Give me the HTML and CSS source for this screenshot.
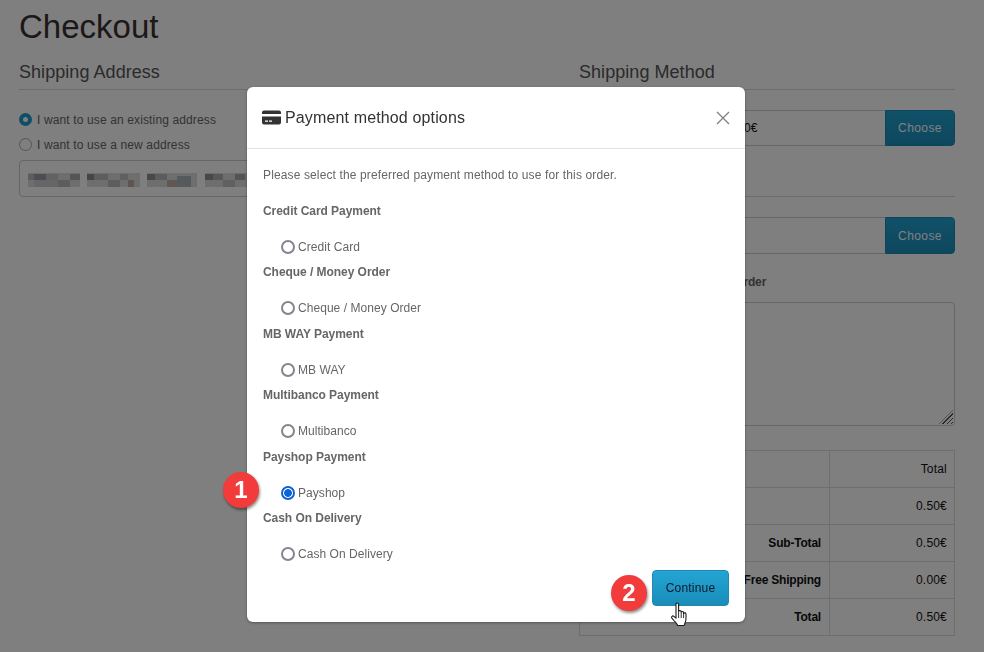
FILE: index.html
```html
<!DOCTYPE html>
<html lang="en">
<head>
  <meta charset="UTF-8" />
  <title>Checkout</title>
  <link rel="stylesheet" href="styles.css">
</head>
<body>
  <div class="page">
    <h1>Checkout</h1>
    <div class="columns">
      <div class="col">
        <h2>Shipping Address</h2>
        <label class="address-opt"><input type="radio" name="addr" class="page-radio" checked /> I want to use an existing address</label>
        <label class="address-opt"><input type="radio" name="addr" class="page-radio" /> I want to use a new address</label>
        <div class="address-select">
          <svg class="pixels" width="240" height="14" viewBox="0 0 240 14">
            <rect x="0" y="0" width="52" height="14" fill="#ddd"/>
            <rect x="0" y="1" width="6" height="6" fill="#bbb"/>
            <rect x="6" y="1" width="12" height="6" fill="#9a9aa8"/>
            <rect x="18" y="1" width="12" height="6" fill="#c4c4c4"/>
            <rect x="30" y="7" width="12" height="7" fill="#bbb"/>
            <rect x="42" y="1" width="10" height="6" fill="#a8aab0"/>
            <rect x="6" y="7" width="24" height="7" fill="#ccc"/>
            <rect x="59" y="0" width="53" height="14" fill="#ddd"/>
            <rect x="59" y="1" width="7" height="6" fill="#8a8a92"/>
            <rect x="66" y="1" width="14" height="6" fill="#b4bcbc"/>
            <rect x="80" y="7" width="12" height="7" fill="#bbb"/>
            <rect x="92" y="1" width="8" height="6" fill="#c0c0c0"/>
            <rect x="100" y="7" width="6" height="7" fill="#b8aaa4"/>
            <rect x="119" y="0" width="50" height="14" fill="#ddd"/>
            <rect x="119" y="1" width="8" height="6" fill="#909098"/>
            <rect x="127" y="1" width="12" height="6" fill="#b8b8b8"/>
            <rect x="139" y="7" width="10" height="7" fill="#c0b0a8"/>
            <rect x="149" y="3" width="14" height="11" fill="#aab4ba"/>
            <rect x="177" y="0" width="50" height="14" fill="#ddd"/>
            <rect x="177" y="1" width="8" height="6" fill="#8e8e9a"/>
            <rect x="185" y="1" width="10" height="6" fill="#b0b0b0"/>
            <rect x="195" y="7" width="12" height="7" fill="#c0c0c0"/>
            <rect x="207" y="1" width="10" height="6" fill="#a8a8b0"/>
          </svg>
        </div>
      </div>
      <div class="col">
        <h2>Shipping Method</h2>
        <div class="input-group">
          <div class="input-box">Free Shipping Standard - 0.50€</div>
          <button class="btn-choose">Choose</button>
        </div>
        <div class="divider"></div>
        <div class="input-group tall">
          <div class="input-box"></div>
          <button class="btn-choose">Choose</button>
        </div>
        <div class="comment-label">Add Comments About Your Order</div>
        <div class="comment-wrap">
          <textarea class="comment-box"></textarea>
          <span class="grip"></span>
        </div>
        <table class="totals">
          <tr><td colspan="2"></td><td class="amount">Total</td></tr>
          <tr><td colspan="2"></td><td class="amount">0.50€</td></tr>
          <tr><td colspan="2" class="label">Sub-Total</td><td class="amount">0.50€</td></tr>
          <tr><td colspan="2" class="label">Free Shipping</td><td class="amount">0.00€</td></tr>
          <tr><td colspan="2" class="label">Total</td><td class="amount">0.50€</td></tr>
        </table>
      </div>
    </div>
  </div>

  <div class="backdrop">
    <div class="modal">
      <div class="modal-header">
        <h3>
          <svg class="card-icon" width="19" height="15" viewBox="0 0 19 15">
            <path fill="#333" d="M2 0.5h15a2 2 0 0 1 2 2V4H0V2.500a2 2 0 0 1 2-2zM0 6.500h19v6a2 2 0 0 1-2 2H2a2 2 0 0 1-2-2zM3 10.500v1.200h3v-1.200zM7 10.500v1.200h3v-1.200z"/>
          </svg>
          Payment method options
        </h3>
        <svg class="close" width="14" height="14" viewBox="0 0 14 14">
          <path d="M1 1l12 12M13 1L1 13" stroke="#808080" stroke-width="1.300" fill="none"/>
        </svg>
      </div>
      <div class="modal-body">
        <p class="intro">Please select the preferred payment method to use for this order.</p>
        <div class="pay-group">
          <div class="pay-title">Credit Card Payment</div>
          <label class="pay-opt"><input type="radio" name="pay" /> Credit Card</label>
        </div>
        <div class="pay-group">
          <div class="pay-title">Cheque / Money Order</div>
          <label class="pay-opt"><input type="radio" name="pay" /> Cheque / Money Order</label>
        </div>
        <div class="pay-group">
          <div class="pay-title">MB WAY Payment</div>
          <label class="pay-opt"><input type="radio" name="pay" /> MB WAY</label>
        </div>
        <div class="pay-group">
          <div class="pay-title">Multibanco Payment</div>
          <label class="pay-opt"><input type="radio" name="pay" /> Multibanco</label>
        </div>
        <div class="pay-group">
          <div class="pay-title">Payshop Payment</div>
          <label class="pay-opt"><input type="radio" name="pay" checked /> Payshop</label>
        </div>
        <div class="pay-group">
          <div class="pay-title">Cash On Delivery</div>
          <label class="pay-opt"><input type="radio" name="pay" /> Cash On Delivery</label>
        </div>
      </div>
      <div class="modal-footer">
        <button class="btn-continue">Continue</button>
      </div>
      <span class="step step-one">1</span>
      <span class="step step-two">2</span>
      <svg class="hand" width="18" height="26" viewBox="0 0 18 26">
        <path fill="#fff" stroke="#1a1a1a" stroke-width="1.100" stroke-linejoin="round" d="M5 2.200c0-1.600 2.600-1.600 2.600 0V9.500c.3-1.300 2.500-1.200 2.600.2v.6c.4-1.100 2.300-1 2.400.4v.7c.5-.9 2.300-.7 2.400.8 .1 2.800 .2 5.300-.5 7.500-.4 1.400-1 2.500-1.300 3.800H6.600c-.6-1.800-2-3-3.300-4.500L.9 16.100c-.9-1.300 .7-2.900 2-1.800L5 16.200z"/>
        <path stroke="#1a1a1a" stroke-width=".900" fill="none" d="M7.600 10v6M10.200 10.500v5.500M12.600 11v5"/>
      </svg>
    </div>
  </div>
</body>
</html>
```

FILE: styles.css
```css
* {
  box-sizing: border-box;
}

html, body {
  height: 100%;
}

body {
  margin: 0;
  background: #fff;
  color: #333;
  font-family: "Liberation Sans", Arial, sans-serif;
  font-size: 12px;
  overflow: hidden;
}

.page {
  padding: 0 29px 0 19px;
}

h1 {
  margin: 0;
  padding-top: 9px;
  height: 54px;
  font-size: 33px;
  line-height: 36px;
  font-weight: 400;
  color: #3a3030;
}

.columns {
  display: grid;
  grid-template-columns: 1fr 376px;
  column-gap: 30px;
}

h2 {
  margin: 0 0 20px;
  height: 36px;
  padding-top: 8px;
  border-bottom: 1px solid #d8d8d8;
  font-size: 18px;
  line-height: 20px;
  font-weight: 400;
  color: #555;
  letter-spacing: 0.05px;
}

.address-opt {
  display: flex;
  align-items: center;
  height: 18px;
  margin-bottom: 7px;
  padding-top: 1px;
  color: #666;
  letter-spacing: 0.13px;
}

.page-radio {
  appearance: none;
  width: 13px;
  height: 13px;
  margin: 0 5px 0 0;
  border: 1px solid #aaa;
  border-radius: 50%;
  background: #fff;
}

.page-radio:checked {
  border: 4px solid #1d9ccd;
  background: #fff;
}

.address-select {
  height: 37px;
  margin-top: 2px;
  padding: 12px 8px;
  border: 1px solid #ccc;
  border-radius: 4px;
  background: #fff;
}

.pixels {
  display: block;
}

.input-group {
  display: flex;
  height: 36px;
}

.input-group.tall {
  height: 37px;
}

.input-box {
  flex: 1;
  padding: 10px;
  border: 1px solid #ccc;
  border-right: 0;
  border-radius: 4px 0 0 4px;
  background: #fff;
  color: #111;
  line-height: 15px;
  white-space: nowrap;
}

.btn-choose {
  width: 70px;
  border: 1px solid #1d8ab4;
  border-radius: 0 4px 4px 0;
  background: linear-gradient(#21a2d2, #1b8fbc);
  color: #fff;
  font-family: inherit;
  font-size: 12px;
  letter-spacing: 0.4px;
}

.divider {
  height: 51px;
  margin-bottom: 20px;
  border-bottom: 1px solid #d8d8d8;
}

.comment-label {
  margin-top: 20px;
  height: 17px;
  font-weight: 700;
  color: #666;
  line-height: 17px;
  letter-spacing: -0.16px;
}

.comment-wrap {
  position: relative;
  margin-top: 11px;
}

.comment-box {
  display: block;
  width: 100%;
  height: 124px;
  border: 1px solid #ccc;
  border-radius: 4px;
  background: #fff;
  resize: none;
}

.grip {
  position: absolute;
  right: 2px;
  bottom: 2px;
  width: 14px;
  height: 14px;
  clip-path: polygon(100% 0, 100% 100%, 0 100%);
  background: repeating-linear-gradient(135deg, #555 0 1px, transparent 1px 3px);
}

.totals {
  width: 100%;
  margin-top: 24px;
  border-collapse: collapse;
  color: #111;
  table-layout: fixed;
}

.totals td {
  height: 37px;
  padding: 0 8px;
  border: 1px solid #ddd;
  text-align: right;
}

.totals .amount {
  width: 125px;
  padding-right: 7px;
  letter-spacing: 0.2px;
}

.totals .label {
  font-weight: 700;
  letter-spacing: -0.2px;
}

.backdrop {
  position: fixed;
  inset: 0;
  background: rgba(0, 0, 0, 0.5);
  padding: 87px 0 0 247px;
}

.modal {
  position: relative;
  width: 498px;
  height: 535px;
  background: #fff;
  border-radius: 6px;
  box-shadow: 0 1px 3px rgba(0, 0, 0, 0.35);
}

.modal-header {
  display: flex;
  align-items: center;
  justify-content: space-between;
  height: 62px;
  padding: 0 15px;
  border-bottom: 1px solid #e2e2e8;
}

.modal-header h3 {
  display: flex;
  align-items: center;
  gap: 4px;
  margin: 0;
  font-size: 16px;
  font-weight: 400;
  color: #333;
  letter-spacing: 0.14px;
}

.modal-body {
  padding: 19px 16px 0;
  color: #666;
}

.intro {
  margin: 0 0 21px;
  line-height: 15px;
  letter-spacing: 0.13px;
}

.pay-group {
  height: 61.4px;
}

.pay-title {
  height: 14px;
  line-height: 14px;
  font-weight: 700;
  letter-spacing: -0.05px;
}

.pay-opt {
  display: flex;
  align-items: center;
  gap: 3px;
  height: 18px;
  margin: 20px 0 0 18px;
  letter-spacing: 0.05px;
}

.pay-opt input {
  appearance: none;
  width: 14px;
  height: 14px;
  margin: 0;
  border: 2px solid #85858f;
  border-radius: 50%;
  background: #fff;
}

.pay-opt input:checked {
  border-color: #0a63d6;
  background: radial-gradient(circle, #0a63d6 0 3.500px, #fff 4.200px);
}

.modal-footer {
  position: absolute;
  right: 16px;
  bottom: 16px;
}

.btn-continue {
  display: block;
  width: 77px;
  height: 36px;
  border: 1px solid #1d8ab4;
  border-radius: 4px;
  background: linear-gradient(#23a4d3, #1a8dba);
  color: #0d1a2b;
  font-family: inherit;
  font-size: 12px;
  letter-spacing: 0.2px;
}

.step {
  position: absolute;
  width: 36px;
  height: 36px;
  border-radius: 50%;
  background: #f23b3b;
  box-shadow: 1px 2px 3px rgba(0, 0, 0, 0.45);
  color: #fff;
  font-size: 24px;
  font-weight: 700;
  line-height: 36px;
  text-align: center;
}

.step-one {
  left: -24px;
  top: 385px;
}

.step-two {
  left: 364px;
  top: 488px;
}

.hand {
  position: absolute;
  left: 424px;
  top: 515px;
}
```
